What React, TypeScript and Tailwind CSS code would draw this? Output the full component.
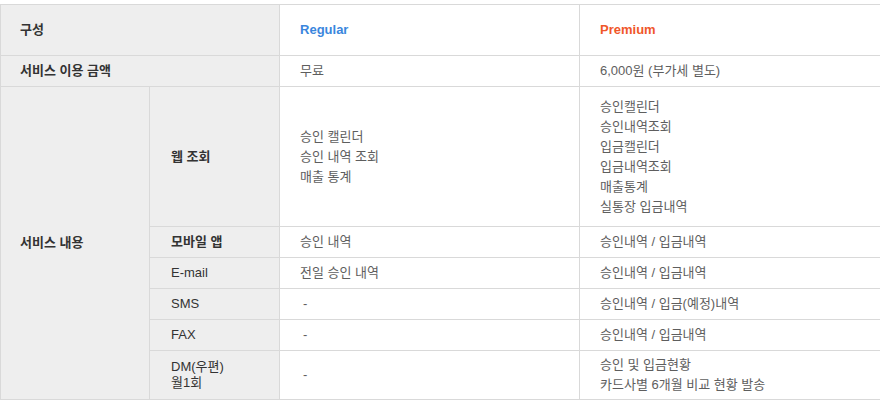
import React from "react";

const font = { fontFamily: '"Liberation Sans", "Noto Sans CJK KR", sans-serif' };

const thBase = "border border-[#d9d9d9] bg-[#eeeeee] text-[#333333] text-[13px] align-middle text-left p-0";
const th = `${thBase} font-bold`;
const thN = `${thBase} font-normal`;
const tdBase = "border border-[#d9d9d9] bg-white text-[13px] align-middle text-left p-0";
const td = `${tdBase} text-[#5e5e5e]`;

export default function App() {
  return (
    <div className="w-[880px] h-[400px] bg-white pt-[4px]" style={font}>
      <table className="w-[880px] table-fixed border-collapse">
        <colgroup>
          <col className="w-[149px]" />
          <col className="w-[130px]" />
          <col className="w-[300px]" />
          <col className="w-[301px]" />
        </colgroup>
        <tbody>
          <tr className="h-[51px]">
            <th colSpan={2} className={`${th} pl-[19px]`}>구성</th>
            <td className={`${tdBase} pl-[20px] font-bold text-[#3a86dd]`}>Regular</td>
            <td className={`${tdBase} pl-[20px] font-bold text-[#f0572a]`}>Premium</td>
          </tr>
          <tr className="h-[31px]">
            <th colSpan={2} className={`${th} pl-[19px]`}>서비스 이용 금액</th>
            <td className={`${td} pl-[20px]`}>무료</td>
            <td className={`${td} pl-[20px]`}>6,000원 (부가세 별도)</td>
          </tr>
          <tr className="h-[140px]">
            <th rowSpan={6} className={`${th} pl-[19px]`}>서비스 내용</th>
            <th className={`${th} pl-[21px]`}>웹 조회</th>
            <td className={`${td} pl-[20px] leading-[20px]`}>
              <div>승인 캘린더</div>
              <div>승인 내역 조회</div>
              <div>매출 통계</div>
            </td>
            <td className={`${td} pl-[20px] leading-[20px]`}>
              <div>승인캘린더</div>
              <div>승인내역조회</div>
              <div>입금캘린더</div>
              <div>입금내역조회</div>
              <div>매출통계</div>
              <div>실통장 입금내역</div>
            </td>
          </tr>
          <tr className="h-[31px]">
            <th className={`${th} pl-[21px]`}>모바일 앱</th>
            <td className={`${td} pl-[20px]`}>승인 내역</td>
            <td className={`${td} pl-[20px]`}>승인내역 / 입금내역</td>
          </tr>
          <tr className="h-[31px]">
            <th className={`${thN} pl-[21px]`}>E-mail</th>
            <td className={`${td} pl-[20px]`}>전일 승인 내역</td>
            <td className={`${td} pl-[20px]`}>승인내역 / 입금내역</td>
          </tr>
          <tr className="h-[31px]">
            <th className={`${thN} pl-[21px]`}>SMS</th>
            <td className={`${td} pl-[23px]`}>-</td>
            <td className={`${td} pl-[20px]`}>승인내역 / 입금(예정)내역</td>
          </tr>
          <tr className="h-[31px]">
            <th className={`${thN} pl-[21px]`}>FAX</th>
            <td className={`${td} pl-[23px]`}>-</td>
            <td className={`${td} pl-[20px]`}>승인내역 / 입금내역</td>
          </tr>
          <tr className="h-[49px]">
            <th className={`${thN} pl-[21px] leading-[16px]`}>
              <div>DM(우편)</div>
              <div>월1회</div>
            </th>
            <td className={`${td} pl-[23px]`}>-</td>
            <td className={`${td} pl-[20px] leading-[20px]`}>
              <div>승인 및 입금현황</div>
              <div>카드사별 6개월 비교 현황 발송</div>
            </td>
          </tr>
        </tbody>
      </table>
    </div>
  );
}
